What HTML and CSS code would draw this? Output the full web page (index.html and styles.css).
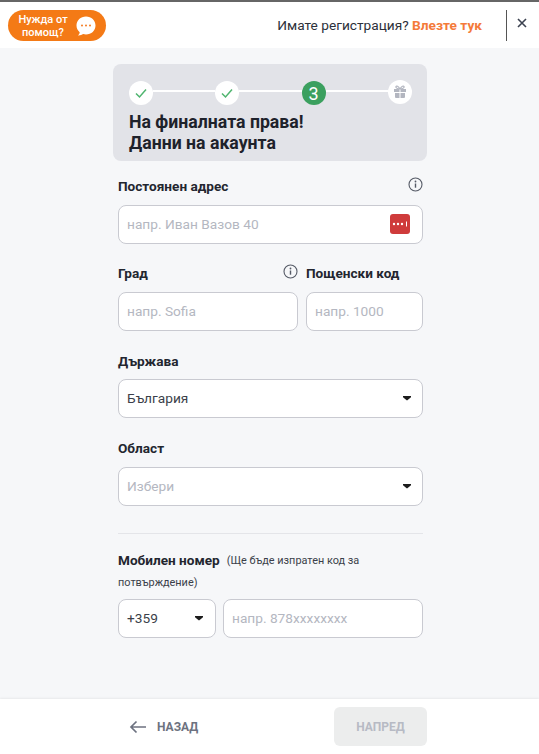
FILE: index.html
```html
<!DOCTYPE html>
<html lang="bg">
<head>
  <meta charset="UTF-8">
  <meta name="viewport" content="width=device-width, initial-scale=1.0">
  <title>Данни на акаунта</title>
  <link rel="stylesheet" href="styles.css">
</head>
<body>
  <header class="topbar">
    <div class="help-pill">
      <span class="help-text">Нужда от<br>помощ?</span>
      <svg class="help-icon" width="22" height="22" viewBox="0 0 22 22">
        <path d="M11 1.500c5.400 0 9.500 3.900 9.500 9s-4.100 9-9.500 9c-1 0-2-.1-2.900-.4-1.100.9-3 1.500-5.100 1.400 1-.9 1.600-2 1.700-3.300C2.700 15.500 1.500 13.200 1.500 10.500c0-5.100 4.100-9 9.500-9z" fill="#fff"/>
        <circle cx="7" cy="10.500" r="1" fill="#f47a20"/>
        <circle cx="11" cy="10.500" r="1" fill="#f47a20"/>
        <circle cx="15" cy="10.500" r="1" fill="#f47a20"/>
      </svg>
    </div>
    <div class="login-note">Имате регистрация? <a class="login-link">Влезте тук</a></div>
    <div class="close-box">
      <svg width="10" height="10" viewBox="0 0 10 10"><path d="M1 1l8 8M9 1L1 9" stroke="#3c4250" stroke-width="1.600"/></svg>
    </div>
  </header>

  <main class="content">
    <section class="progress-card">
      <div class="steps">
        <div class="step">
          <svg width="14" height="12" viewBox="0 0 14 12"><path d="M2 6.500l3.500 3.500L12 2.500" fill="none" stroke="#4fb56f" stroke-width="1.500"/></svg>
        </div>
        <div class="step-line"></div>
        <div class="step">
          <svg width="14" height="12" viewBox="0 0 14 12"><path d="M2 6.500l3.500 3.500L12 2.500" fill="none" stroke="#4fb56f" stroke-width="1.500"/></svg>
        </div>
        <div class="step-line"></div>
        <div class="step step-current">3</div>
        <div class="step-line"></div>
        <div class="step step-gift">
          <svg width="14" height="14" viewBox="0 0 14 14">
            <path d="M1 4h5.500v3H1zM7.500 4H13v3H7.500zM2 8h4.500v5H3a1 1 0 0 1-1-1zM7.500 8H12v4a1 1 0 0 1-1 1H7.500z" fill="#b3b6c0"/>
            <path d="M7 4C5.500 1 3.500.5 3 1.500S4 4 7 4zm0 0c1.500-3 3.500-3.500 4-2.500S10 4 7 4z" fill="none" stroke="#b3b6c0" stroke-width="1.200"/>
          </svg>
        </div>
      </div>
      <h1 class="progress-title">На финалната права!<br>Данни на акаунта</h1>
    </section>

    <form class="form">
      <div class="label-row">
        <label class="label">Постоянен адрес</label>
        <svg class="info" width="15" height="15" viewBox="0 0 15 15"><circle cx="7.500" cy="7.500" r="6.500" fill="none" stroke="#555a66" stroke-width="1.100"/><path d="M7.500 6.500v4.200" stroke="#555a66" stroke-width="1.400"/><circle cx="7.500" cy="4.500" r=".9" fill="#555a66"/></svg>
      </div>
      <div class="field">
        <span class="placeholder">напр. Иван Вазов 40</span>
        <span class="dots-badge">
          <svg width="16" height="6" viewBox="0 0 16 6"><circle cx="2" cy="3" r="1.200" fill="#fff"/><circle cx="6" cy="3" r="1.200" fill="#fff"/><circle cx="10" cy="3" r="1.200" fill="#fff"/><path d="M14.500 .5v5" stroke="#fff"/></svg>
        </span>
      </div>

      <div class="city-row">
        <div class="city-col">
          <div class="label-row">
            <label class="label">Град</label>
            <svg class="info" width="15" height="15" viewBox="0 0 15 15"><circle cx="7.500" cy="7.500" r="6.500" fill="none" stroke="#555a66" stroke-width="1.100"/><path d="M7.500 6.500v4.200" stroke="#555a66" stroke-width="1.400"/><circle cx="7.500" cy="4.500" r=".9" fill="#555a66"/></svg>
          </div>
          <div class="field"><span class="placeholder">напр. Sofia</span></div>
        </div>
        <div class="zip-col">
          <div class="label-row">
            <label class="label">Пощенски код</label>
          </div>
          <div class="field"><span class="placeholder">напр. 1000</span></div>
        </div>
      </div>

      <div class="group group-country">
        <div class="label-row"><label class="label">Държава</label></div>
        <div class="field">
          <span class="value">България</span>
          <span class="caret"></span>
        </div>
      </div>

      <div class="group">
        <div class="label-row"><label class="label">Област</label></div>
        <div class="field">
          <span class="placeholder">Избери</span>
          <span class="caret"></span>
        </div>
      </div>

      <hr class="divider">

      <div class="phone-label">
        <span class="label">Мобилен номер</span>
        <span class="note">(Ще бъде изпратен код за</span>
      </div>
      <div class="note note-line">потвърждение)</div>
      <div class="phone-row">
        <div class="field code-field">
          <span class="value">+359</span>
          <span class="caret"></span>
        </div>
        <div class="field number-field"><span class="placeholder">напр. 878xxxxxxxx</span></div>
      </div>
    </form>
  </main>

  <footer class="footer">
    <a class="btn-back">
      <svg width="18" height="14" viewBox="0 0 18 14"><path d="M17 7H2M7.500 1.500L2 7l5.500 5.500" fill="none" stroke="#6d7280" stroke-width="1.700"/></svg>
      НАЗАД
    </a>
    <button type="button" class="btn-next" disabled>НАПРЕД</button>
  </footer>
</body>
</html>
```

FILE: styles.css
```css
* {
  box-sizing: border-box;
}

html, body {
  height: 100%;
}

body {
  margin: 0;
  font-family: Roboto, "Liberation Sans", sans-serif;
  background-color: #f6f7f9;
  color: #23262f;
  display: flex;
  flex-direction: column;
  overflow: hidden;
}

/* top bar */
.topbar {
  height: 48px;
  background-color: #fff;
  border-top: 2px solid #666;
  display: flex;
  align-items: center;
  padding: 0 0 0 8px;
}

.help-pill {
  width: 98px;
  height: 31px;
  margin-top: 1px;
  padding: 0 9px 0 8px;
  background-color: #f47a16;
  border-radius: 16px;
  display: flex;
  align-items: center;
  justify-content: space-between;
}

.help-text {
  width: 54px;
  color: #fff;
  font-size: 11px;
  font-weight: 500;
  line-height: 13px;
  text-align: center;
}

.login-note {
  margin-left: auto;
  font-size: 13.700px;
  color: #2c303a;
}

.login-link {
  color: #f47a3a;
  font-weight: 700;
}

.close-box {
  width: 33px;
  height: 31px;
  margin-left: 24px;
  padding: 0 3px 4px 0;
  border-left: 1px solid #555;
  display: flex;
  align-items: center;
  justify-content: center;
}

/* main column */
.content {
  flex: 1;
  width: 314px;
  margin-left: 113px;
  padding-top: 16px;
}

.progress-card {
  height: 97px;
  background-color: #e2e3e8;
  border-radius: 8px;
  padding: 17px 15px 0 16px;
}

.steps {
  display: flex;
  align-items: center;
  height: 24px;
}

.step {
  width: 24px;
  height: 24px;
  border-radius: 50%;
  background-color: #fff;
  flex-shrink: 0;
  display: flex;
  align-items: center;
  justify-content: center;
}

.step-current {
  background-color: #3ba05f;
  color: #fff;
  font-size: 18px;
}

.step-gift {
  margin-top: -2px;
}

.step-line {
  flex: 1;
  height: 2px;
  margin-top: -4px;
  background-color: #fff;
}

.progress-title {
  margin: 7px 0 0;
  font-size: 17.700px;
  font-weight: 700;
  line-height: 21px;
  color: #1e222b;
}

/* form */
.form {
  width: 305px;
  margin-left: 5px;
  padding-top: 15px;
}

.label-row {
  display: flex;
  align-items: center;
  justify-content: space-between;
  height: 20px;
  margin-bottom: 9px;
}

.label {
  font-size: 13.600px;
  font-weight: 700;
  color: #23262f;
}

.info {
  margin-bottom: 4px;
}

.field {
  height: 39px;
  background-color: #fff;
  border: 1px solid #c9cad1;
  border-radius: 8px;
  padding: 0 8px 1px;
  display: flex;
  align-items: center;
  justify-content: space-between;
  font-size: 13.700px;
}

.placeholder {
  color: #b4b7c1;
}

.value {
  color: #3b3f4a;
}

.dots-badge {
  width: 20px;
  height: 20px;
  margin-right: 4px;
  background-color: #cf3b3b;
  border-radius: 3px;
  display: flex;
  align-items: center;
  justify-content: center;
}

.caret {
  width: 8px;
  height: 5px;
  margin-right: 3px;
  background-color: #1c1c1c;
  clip-path: polygon(0 0, 100% 0, 100% 35%, 50% 100%, 0 35%);
}

.city-row {
  display: flex;
  gap: 8px;
  margin-top: 19px;
}

.city-col {
  width: 180px;
}

.zip-col {
  width: 117px;
}

.group {
  margin-top: 20px;
}

.group-country .label-row {
  margin-bottom: 8px;
}

.divider {
  height: 1px;
  margin: 27px 0 0;
  border: 0;
  background-color: #e4e5e9;
}

.phone-label {
  margin-top: 15px;
  height: 22px;
  display: flex;
  align-items: center;
  gap: 7px;
}

.note {
  font-size: 10.900px;
  color: #3b3f4a;
}

.note-line {
  height: 22px;
  padding-top: 1px;
  line-height: 22px;
}

.phone-row {
  display: flex;
  gap: 7px;
  margin-top: 6px;
}

.code-field {
  width: 98px;
}

.code-field .caret {
  margin-right: 4px;
}

.number-field {
  flex: 1;
}

/* bottom bar */
.footer {
  height: 55px;
  background-color: #fff;
  box-shadow: 0 -1px 2px rgba(0, 0, 0, 0.06);
  display: flex;
  align-items: center;
  justify-content: space-between;
  padding: 0 112px 0 129px;
}

.btn-back {
  display: flex;
  align-items: center;
  gap: 10px;
  font-size: 12px;
  font-weight: 700;
  color: #6d7280;
}

.btn-next {
  width: 93px;
  height: 39px;
  border: 0;
  border-radius: 6px;
  background-color: #eceded;
  color: #b7bac4;
  font-family: inherit;
  font-size: 12px;
  font-weight: 700;
}
```
